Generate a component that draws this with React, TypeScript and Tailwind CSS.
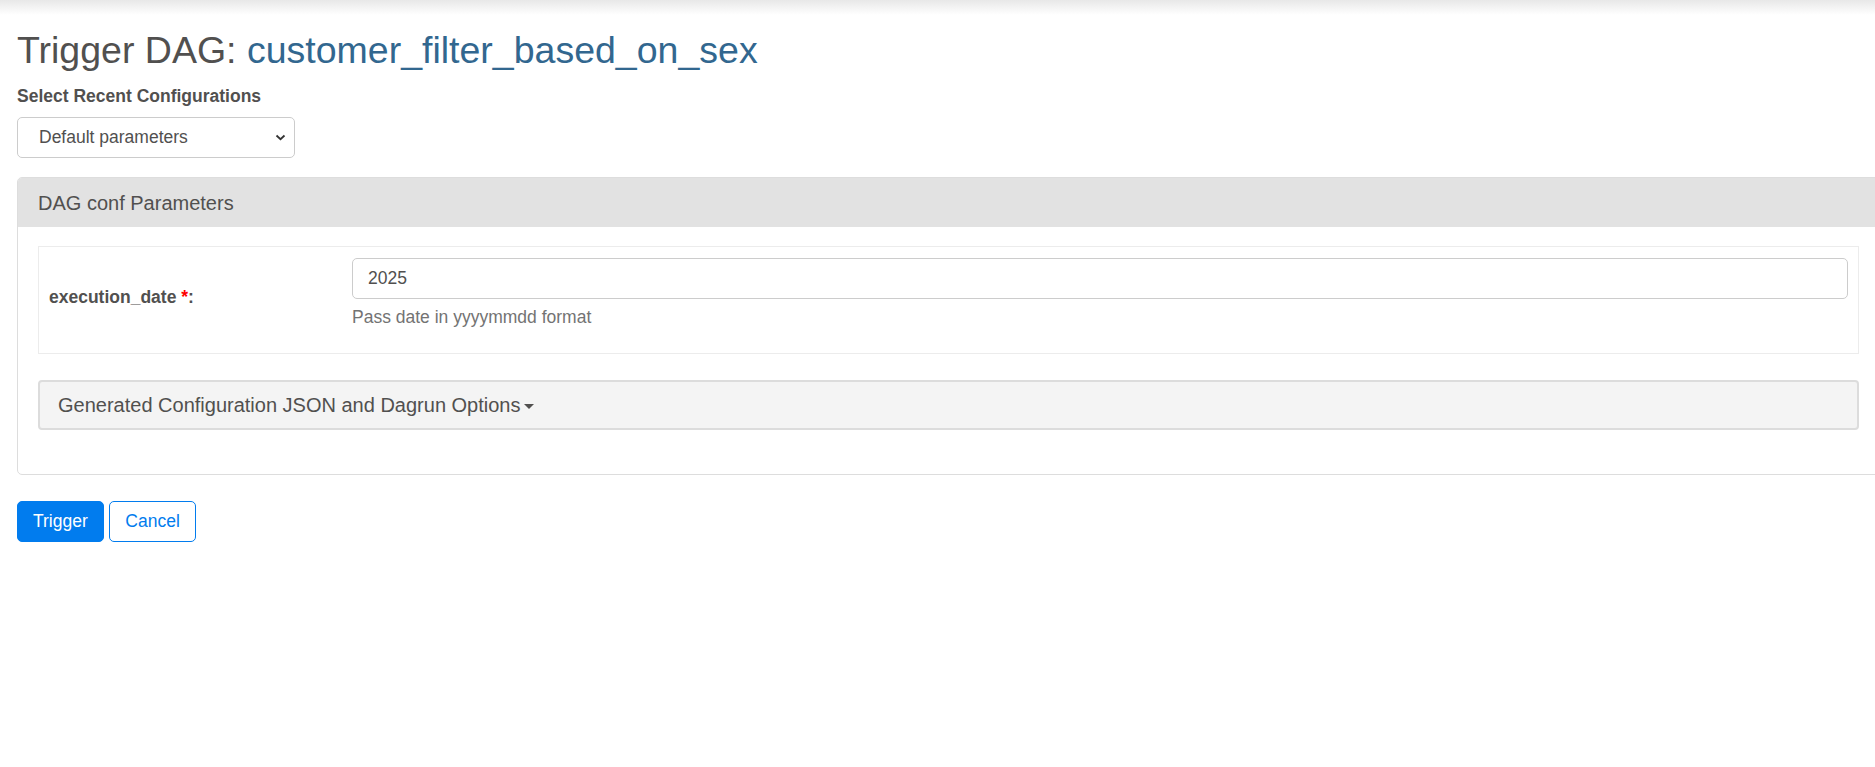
export default function App() {
  return (
    <div className="min-h-screen w-full overflow-hidden bg-white font-['Liberation_Sans',Arial,sans-serif] text-[17.5px] leading-[25px] text-[#51504f]">
      <div className="h-[15px] bg-linear-to-b from-[#e8e8e8] to-white" />
      <div className="w-[1880px] pl-[17px]">
        <h2 className="mt-[15px] mb-[12.5px] text-[37.5px] leading-[41px] font-normal">
          Trigger DAG: <a className="text-[#32678f]">customer_filter_based_on_sex</a>
        </h2>

        <label className="block font-bold mb-[8px]">Select Recent Configurations</label>
        <div className="flex items-center justify-between w-[278px] h-[41px] pl-[21px] pr-[8px] border border-[#ccc] rounded-[5px] bg-white">
          <span>Default parameters</span>
          <svg width="11" height="7" viewBox="0 0 11 7" fill="none">
            <path d="M1.5 1.5 L5.5 5.2 L9.5 1.5" stroke="#333" strokeWidth="1.8" />
          </svg>
        </div>

        <div className="mt-[19.5px] w-[1863px] border border-[#ddd] rounded-[5px]">
          <div className="h-[49px] flex items-center px-[20px] bg-[#e2e2e2] rounded-t-[4px] text-[20px] leading-[22px]">
            DAG conf Parameters
          </div>
          <div className="px-[20px] pt-[19px] pb-[44px]">
            <div className="flex border border-[#ececec] h-[108px]">
              <div className="w-[303px] shrink-0 flex items-center px-[10px] pb-[6px] font-bold">
                <span>
                  execution_date <span className="text-[#ff0000]">*</span>:
                </span>
              </div>
              <div className="flex-1 pt-[11px] px-[10px]">
                <input
                  className="block w-full h-[41px] px-[15px] border border-[#ccc] rounded-[5px] text-[#51504f] outline-none"
                  defaultValue="2025"
                  readOnly
                />
                <p className="mt-[6px] text-[#737373]">Pass date in yyyymmdd format</p>
              </div>
            </div>

            <div className="mt-[26px] h-[50px] flex items-center pl-[18px] bg-[#f4f4f4] border-2 border-[#dcdcdc] rounded-[4px] text-[20px] leading-[22px]">
              Generated Configuration JSON and Dagrun Options
              <span className="ml-[3px] mt-[2px] w-0 h-0 border-t-[5px] border-t-[#51504f] border-x-[5px] border-x-transparent" />
            </div>
          </div>
        </div>

        <div className="mt-[26px] flex gap-[5.5px]">
          <button className="h-[41px] px-[15px] rounded-[5px] bg-[#017cee] border border-[#017cee] text-white">
            Trigger
          </button>
          <button className="h-[41px] px-[15px] rounded-[5px] bg-white border border-[#017cee] text-[#017cee]">
            Cancel
          </button>
        </div>
      </div>
    </div>
  );
}
